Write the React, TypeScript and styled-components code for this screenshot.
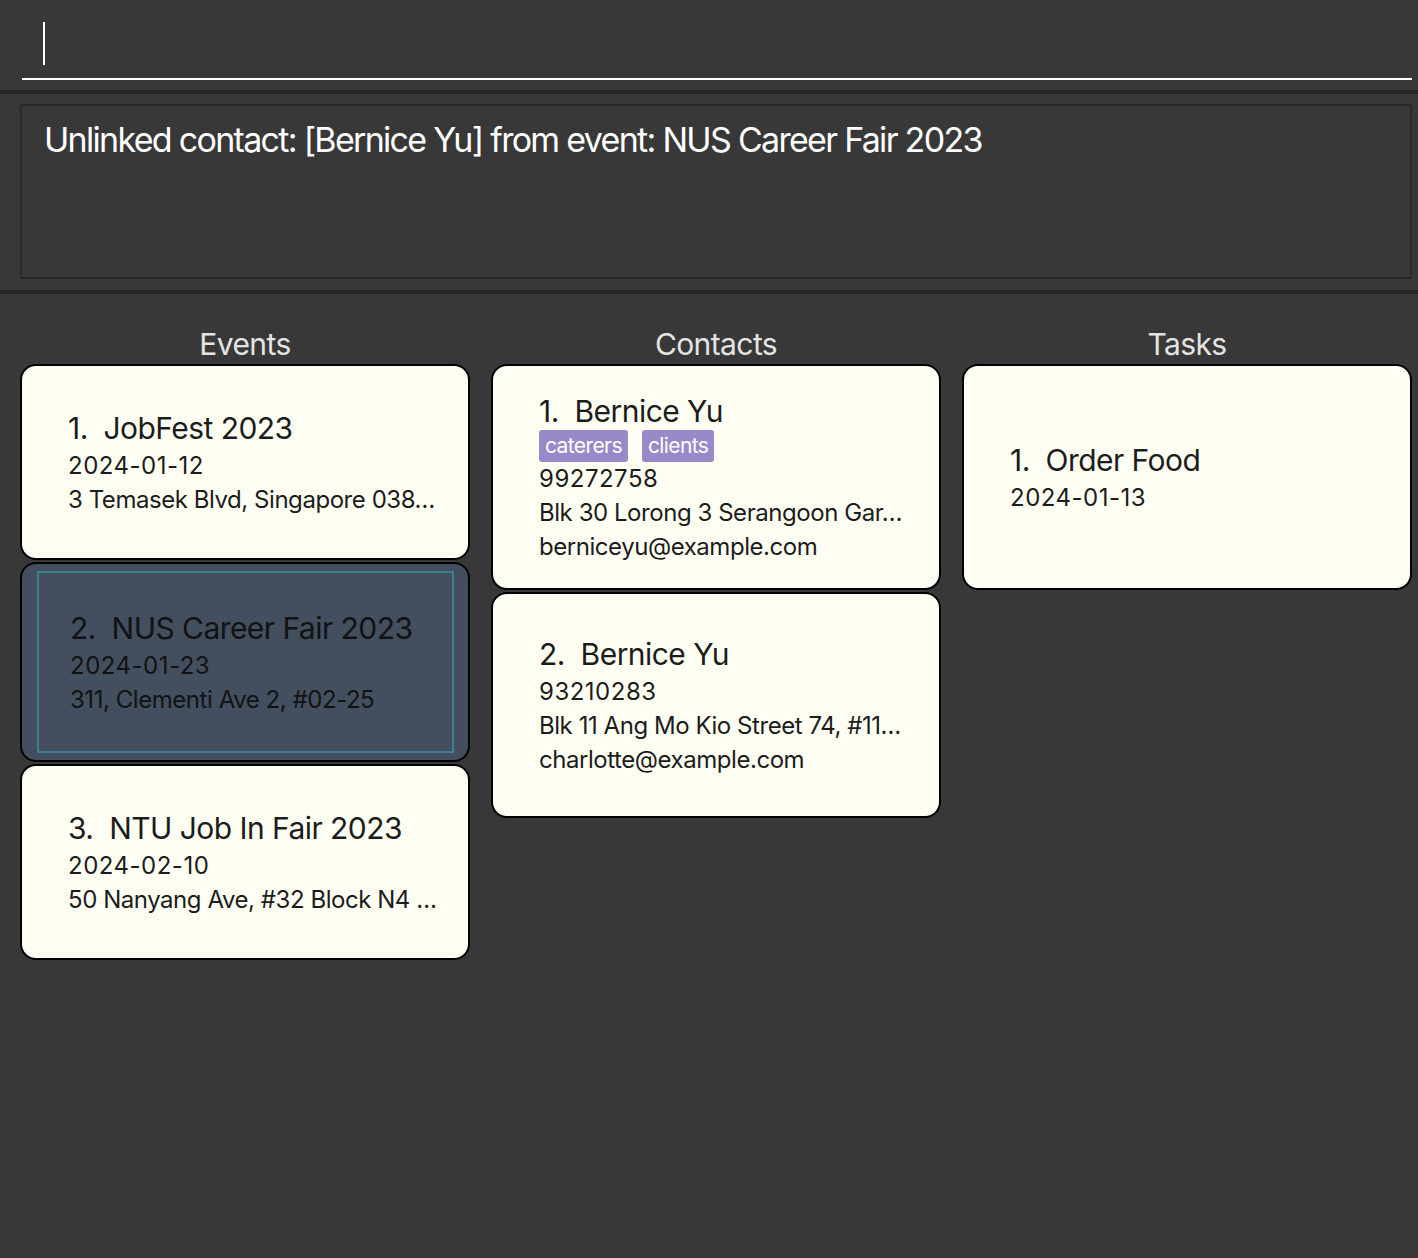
import React from "react";
import styled, { createGlobalStyle } from "styled-components";

const Global = createGlobalStyle`
  html, body { margin: 0; padding: 0; background: #383838; }
  body { font-family: Inter, "Noto Sans", "Liberation Sans", sans-serif; }
  * { box-sizing: border-box; }
`;

const Page = styled.div`
  width: 1418px;
  min-height: 1258px;
  background: #383838;
  display: flex;
  flex-direction: column;
`;

const CommandBar = styled.div`
  height: 90px;
  padding: 22px 6px 0 22px;
`;

const CommandInput = styled.div`
  height: 58px;
  border-bottom: 2px solid #ffffff;
  padding-left: 21px;
`;

const Caret = styled.div`
  width: 2px;
  height: 43px;
  background: #ffffff;
`;

const Divider = styled.div`
  height: 4px;
  background: #262626;
`;

const ResultArea = styled.div`
  height: 196px;
  padding: 10px 6px 11px 20px;
`;

const ResultBox = styled.div`
  height: 100%;
  border: 2px solid #2a2a2a;
  padding: 14px 22px;
  color: #ffffff;
  font-size: 34px;
  line-height: 40px;
  letter-spacing: -1.7px;
`;

const Lists = styled.div`
  display: grid;
  grid-template-columns: repeat(3, minmax(0, 1fr));
  gap: 21px;
  padding: 31px 6px 0 20px;
`;

const Column = styled.div`
  display: flex;
  flex-direction: column;
  min-width: 0;
`;

const Header = styled.div`
  text-align: center;
  color: #e4e4e4;
  font-size: 30px;
  line-height: 38px;
  letter-spacing: -0.6px;
  margin-bottom: 1px;
`;

const Stack = styled.div`
  display: flex;
  flex-direction: column;
  gap: 2px;
`;

const Card = styled.div<{ $h: number; $selected?: boolean }>`
  height: ${(p) => p.$h}px;
  border: 2px solid #000000;
  border-radius: 16px;
  background: ${(p) => (p.$selected ? "#434e5f" : "#fefff2")};
  padding: ${(p) => (p.$selected ? "7px 14px 7px 15px" : "0 20px 0 46px")};
  display: flex;
  flex-direction: column;
  justify-content: center;
  color: ${(p) => (p.$selected ? "#121212" : "#1c1c1c")};
`;

const FocusRing = styled.div`
  flex: 1;
  border: 2px solid #3a8195;
  padding-left: 31px;
  display: flex;
  flex-direction: column;
  justify-content: center;
`;

const Title = styled.div`
  font-size: 30px;
  line-height: 42px;
  white-space: pre;
  letter-spacing: -0.55px;
`;

const Line = styled.div<{ $num?: boolean }>`
  font-size: 24px;
  line-height: 34px;
  white-space: nowrap;
  overflow: hidden;
  letter-spacing: ${(p) => (p.$num ? "0.5px" : "-0.45px")};
`;

const Tags = styled.div`
  display: flex;
  gap: 14px;
  margin-top: -2px;
`;

const Tag = styled.span`
  height: 32px;
  padding: 0 6px;
  background: #9a89c8;
  color: #ffffff;
  border-radius: 3px;
  font-size: 21px;
  line-height: 32px;
  letter-spacing: -0.6px;
`;

const events = [
  { t: "1.  JobFest 2023", d: "2024-01-12", a: "3 Temasek Blvd, Singapore 038…" },
  { t: "2.  NUS Career Fair 2023", d: "2024-01-23", a: "311, Clementi Ave 2, #02-25", sel: true },
  { t: "3.  NTU Job In Fair 2023", d: "2024-02-10", a: "50 Nanyang Ave, #32 Block N4 …" },
];

const EventBody = ({ t, d, a }: { t: string; d: string; a: string }) => (
  <>
    <Title>{t}</Title>
    <Line $num>{d}</Line>
    <Line>{a}</Line>
  </>
);

export default function App() {
  return (
    <Page>
      <Global />
      <CommandBar>
        <CommandInput>
          <Caret />
        </CommandInput>
      </CommandBar>
      <Divider />
      <ResultArea>
        <ResultBox>Unlinked contact: [Bernice Yu] from event: NUS Career Fair 2023</ResultBox>
      </ResultArea>
      <Divider />
      <Lists>
        <Column>
          <Header>Events</Header>
          <Stack>
            {events.map((e) =>
              e.sel ? (
                <Card key={e.t} $h={200} $selected>
                  <FocusRing>
                    <EventBody {...e} />
                  </FocusRing>
                </Card>
              ) : (
                <Card key={e.t} $h={196}>
                  <EventBody {...e} />
                </Card>
              )
            )}
          </Stack>
        </Column>
        <Column>
          <Header>Contacts</Header>
          <Stack>
            <Card $h={226}>
              <Title>1.  Bernice Yu</Title>
              <Tags>
                <Tag>caterers</Tag>
                <Tag>clients</Tag>
              </Tags>
              <Line $num>99272758</Line>
              <Line>Blk 30 Lorong 3 Serangoon Gar…</Line>
              <Line>berniceyu@example.com</Line>
            </Card>
            <Card $h={226}>
              <Title>2.  Bernice Yu</Title>
              <Line $num>93210283</Line>
              <Line>Blk 11 Ang Mo Kio Street 74, #11…</Line>
              <Line>charlotte@example.com</Line>
            </Card>
          </Stack>
        </Column>
        <Column>
          <Header>Tasks</Header>
          <Stack>
            <Card $h={226}>
              <Title>1.  Order Food</Title>
              <Line $num>2024-01-13</Line>
            </Card>
          </Stack>
        </Column>
      </Lists>
    </Page>
  );
}
